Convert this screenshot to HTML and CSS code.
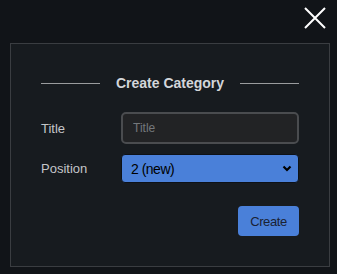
FILE: index.html
```html
<!DOCTYPE html>
<html lang="en">

<head>
    <meta charset="UTF-8">
    <meta name="viewport" content="width=device-width, initial-scale=1.0">
    <title>Create Category</title>
    <link rel="stylesheet" href="styles.css">
</head>

<body>
    <div class="topbar">
        <button type="button" class="close_btn" aria-label="Close">
            <svg width="22" height="22" viewBox="0 0 22 22">
                <path d="M1 1 L21 21 M21 1 L1 21" stroke="#ffffff" stroke-width="2" fill="none" />
            </svg>
        </button>
    </div>

    <div class="panel">
        <div class="heading">
            <span class="rule"></span>
            <h2>Create Category</h2>
            <span class="rule"></span>
        </div>

        <div class="row">
            <label for="title_input">Title</label>
            <input type="text" id="title_input" placeholder="Title">
        </div>

        <div class="row">
            <label for="position_select">Position</label>
            <div class="selectwrap">
                <select id="position_select">
                    <option>1</option>
                    <option selected>2 (new)</option>
                </select>
                <!-- chevron drawn over the select -->
                <svg class="chevron" width="10" height="7" viewBox="0 0 10 7">
                    <path d="M1.5 1.5 L5 5 L8.5 1.5" stroke="#000" stroke-width="2.2" fill="none" />
                </svg>
            </div>
        </div>

        <div class="actions">
            <button type="button" class="btn">Create</button>
        </div>
    </div>
</body>

</html>
```

FILE: styles.css
```css
* {
    margin: 0px;
    padding: 0px;
    box-sizing: border-box;
    font-family: 'Liberation Sans', Arial, sans-serif;
}

body {
    background-color: #111418;
    height: 274px;
    overflow: hidden;
}

.topbar {
    height: 43px;
    display: flex;
    justify-content: flex-end;
    padding: 7px 11px 0 0;
}

.close_btn {
    width: 22px;
    height: 22px;
    border: none;
    background: none;
    display: flex;
}

.panel {
    margin-left: 10px;
    width: 320px;
    height: 224px;
    background-color: #171b1f;
    border: 1px solid #3a3d41;
    padding: 29px 30px;
}

.heading {
    display: flex;
    align-items: center;
    height: 20px;
    gap: 16px;
    margin-bottom: 19px;
}

.rule {
    flex: 1;
    height: 1px;
    background-color: #9a9c9e;
}

.heading h2 {
    font-size: 14px;
    font-weight: bold;
    color: #d3d6da;
}

.row {
    display: flex;
    align-items: center;
    margin-bottom: 10px;
}

.row label {
    width: 80px;
    font-size: 13px;
    color: #c4c6c9;
}

#title_input {
    width: 178px;
    height: 32px;
    background-color: #222325;
    border: 2px solid #4a4c4f;
    border-radius: 5px;
    padding: 0 10px;
    font-size: 12px;
    color: #ddd;
    outline: none;
}

#title_input::placeholder {
    color: #74777b;
}

.selectwrap {
    position: relative;
    width: 178px;
    height: 29px;
}

#position_select {
    appearance: none;
    width: 100%;
    height: 100%;
    background-color: #4a80d9;
    border: 1px solid #0d1117;
    border-radius: 4px;
    padding: 0 9px;
    font-size: 14px;
    letter-spacing: -0.5px;
    color: #000;
    outline: none;
}

.chevron {
    position: absolute;
    right: 7px;
    top: 11px;
    pointer-events: none;
}

.actions {
    display: flex;
    justify-content: flex-end;
    margin-top: 23px;
}

.btn {
    width: 61px;
    height: 30px;
    background-color: #4a80d9;
    border: none;
    border-radius: 4px;
    font-size: 13px;
    letter-spacing: -0.4px;
    color: #1a2233;
}
```
